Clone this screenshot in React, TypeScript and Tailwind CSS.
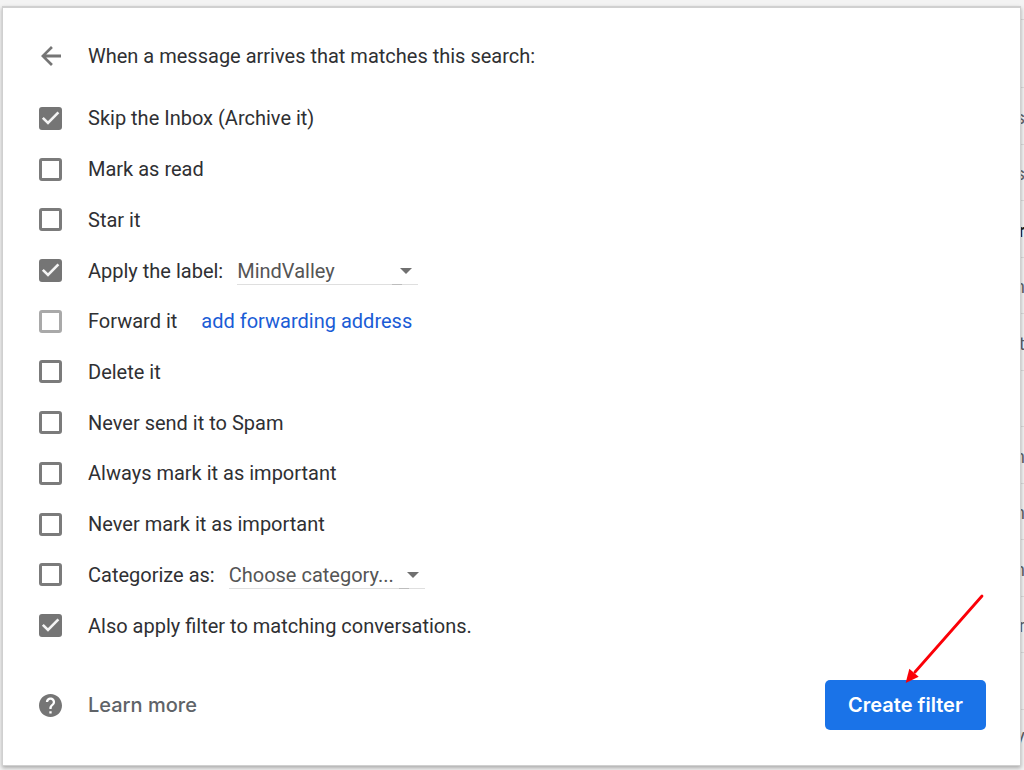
import { useState } from "react";

interface FilterAction {
  id: string;
  label: string;
  disabled?: boolean;
  link?: string;
  select?: { name: string; width: string; options: string[] };
}

const ACTIONS: FilterAction[] = [
  { id: "archive", label: "Skip the Inbox (Archive it)" },
  { id: "read", label: "Mark as read" },
  { id: "star", label: "Star it" },
  {
    id: "label",
    label: "Apply the label:",
    select: { name: "Label", width: "w-[181px]", options: ["MindValley"] },
  },
  { id: "forward", label: "Forward it", disabled: true, link: "add forwarding address" },
  { id: "delete", label: "Delete it" },
  { id: "never-spam", label: "Never send it to Spam" },
  { id: "important", label: "Always mark it as important" },
  { id: "not-important", label: "Never mark it as important" },
  {
    id: "category",
    label: "Categorize as:",
    select: { name: "Category", width: "w-[196px]", options: ["Choose category..."] },
  },
  { id: "existing", label: "Also apply filter to matching conversations." },
];

// last letters of the mail subjects that stick out behind the dialog
const INBOX_ROWS = ["s", "s", "r", "n", "t", "", "n", "n", "n", "r", "", "V"];

function Checkbox({ id, checked, disabled, onChange }: { id: string; checked: boolean; disabled?: boolean; onChange: () => void }) {
  return (
    <span className="relative flex shrink-0">
      <input
        id={id}
        type="checkbox"
        checked={checked}
        disabled={disabled}
        onChange={onChange}
        className="size-[23px] appearance-none rounded-[3px] border-[3px] border-[#7b7b7b] bg-white checked:border-[#757575] checked:bg-[#757575] disabled:border-[#a9a9a9]"
      />
      {checked && (
        <svg viewBox="0 0 23 23" className="pointer-events-none absolute inset-0 size-[23px]" fill="none" stroke="#f4f4f4" strokeWidth="2.6">
          <path d="M3.8 10.8 9 16 19.4 5.4" />
        </svg>
      )}
    </span>
  );
}

function Dropdown({ name, width, options }: { name: string; width: string; options: string[] }) {
  return (
    <span className={`relative flex ${width}`}>
      <select
        aria-label={name}
        className="h-7 w-full appearance-none border-b border-[#dfdfdf] bg-transparent text-[#555]"
      >
        {options.map((o) => (
          <option key={o}>{o}</option>
        ))}
      </select>
      <svg viewBox="0 0 12 6" className="pointer-events-none absolute top-[11px] right-[6px] h-[6px] w-[12px]" fill="#707070">
        <path d="M0 0h12L6 6z" />
      </svg>
      <span className="absolute right-4 bottom-0 h-px w-[10px] bg-[#bdbdbd]" />
    </span>
  );
}

export default function App() {
  const [checked, setChecked] = useState<string[]>(["archive", "label", "existing"]);

  const toggle = (id: string) =>
    setChecked((prev) => (prev.includes(id) ? prev.filter((c) => c !== id) : [...prev, id]));

  return (
    <div className="flex min-h-screen overflow-hidden bg-[#f3f3f3] pl-[2px] font-[Roboto,sans-serif] text-[20px] leading-7 text-[#2f3033]">
      <form
        onSubmit={(e) => e.preventDefault()}
        className="z-10 mt-[6px] mb-1 flex min-w-0 flex-1 flex-col border border-t-2 border-[#d0d0d0] bg-white pt-6 pr-[34px] pb-[35px] pl-9 shadow-[0_2px_4px_rgba(0,0,0,0.3)]"
      >
        <header className="flex h-12 items-center gap-[26px]">
          <button type="button" aria-label="Back" className="flex w-[23px] justify-center">
            <svg viewBox="0 0 20 20" className="size-5 shrink-0" fill="#757575">
              <path d="M20 8.6H5.2l6.7-6.7L10 0 0 10l10 10 1.9-1.9-6.7-6.7H20z" />
            </svg>
          </button>
          <h1>When a message arrives that matches this search:</h1>
        </header>

        <ul className="mt-[13px] grid flex-1 auto-rows-fr">
          {ACTIONS.map((a) => (
            <li key={a.id} className="flex items-center">
              <Checkbox id={a.id} checked={checked.includes(a.id)} disabled={a.disabled} onChange={() => toggle(a.id)} />
              <label htmlFor={a.id} className="ml-[26px]">
                {a.label}
              </label>
              {a.select && (
                <span className="ml-[14px]">
                  <Dropdown {...a.select} />
                </span>
              )}
              {a.link && (
                <a href="#forwarding" className="ml-6 text-[#1a5cd6]">
                  {a.link}
                </a>
              )}
            </li>
          ))}
        </ul>

        <footer className="mt-[29px] flex items-center justify-between font-[Inter,sans-serif] font-medium">
          <a href="#help" className="flex items-center gap-[26px] text-[#5f6368]">
            <svg viewBox="2 2 20 20" className="size-[23px]" fill="#757575">
              <path d="M12 2C6.48 2 2 6.48 2 12s4.48 10 10 10 10-4.48 10-10S17.52 2 12 2zm1 17h-2v-2h2v2zm2.07-7.75-.9.92C13.45 12.9 13 13.5 13 15h-2v-.5c0-1.1.45-2.1 1.17-2.83l1.24-1.26c.37-.36.59-.86.59-1.41 0-1.1-.9-2-2-2s-2 .9-2 2H8c0-2.21 1.79-4 4-4s4 1.79 4 4c0 .88-.36 1.68-.93 2.25z" />
            </svg>
            Learn more
          </a>
          <div className="relative">
            <button type="submit" className="h-[50px] w-[161px] rounded-[5px] bg-[#1a73e8] font-semibold text-white">
              Create filter
            </button>
            {/* red pointer over the button */}
            <svg viewBox="0 0 84 94" className="pointer-events-none absolute -top-[90px] right-0 h-[94px] w-[84px]">
              <path d="M13 82 80 6" stroke="#fb0007" strokeWidth="2.8" strokeLinecap="round" />
              <path d="M3.7 93 7.3 78.7 16.7 86.7z" fill="#fb0007" />
            </svg>
          </div>
        </footer>
      </form>

      <aside aria-hidden="true" className="flex w-[3px] flex-col overflow-hidden pt-[19px] pb-[5px] text-[18px] text-[#5f6368]">
        <div className="h-[68px] shrink-0 border-t border-[#dcdcdc]" />
        <div className="grid flex-1 auto-rows-fr grid-cols-1">
          {INBOX_ROWS.map((letter, i) => (
            <div key={i} className={`flex items-center justify-end border-t border-[#dcdcdc] pt-1 ${i === 2 ? "font-bold text-[#222]" : ""}`}>
              <span className="-mr-px">{letter}</span>
            </div>
          ))}
        </div>
      </aside>
    </div>
  );
}
